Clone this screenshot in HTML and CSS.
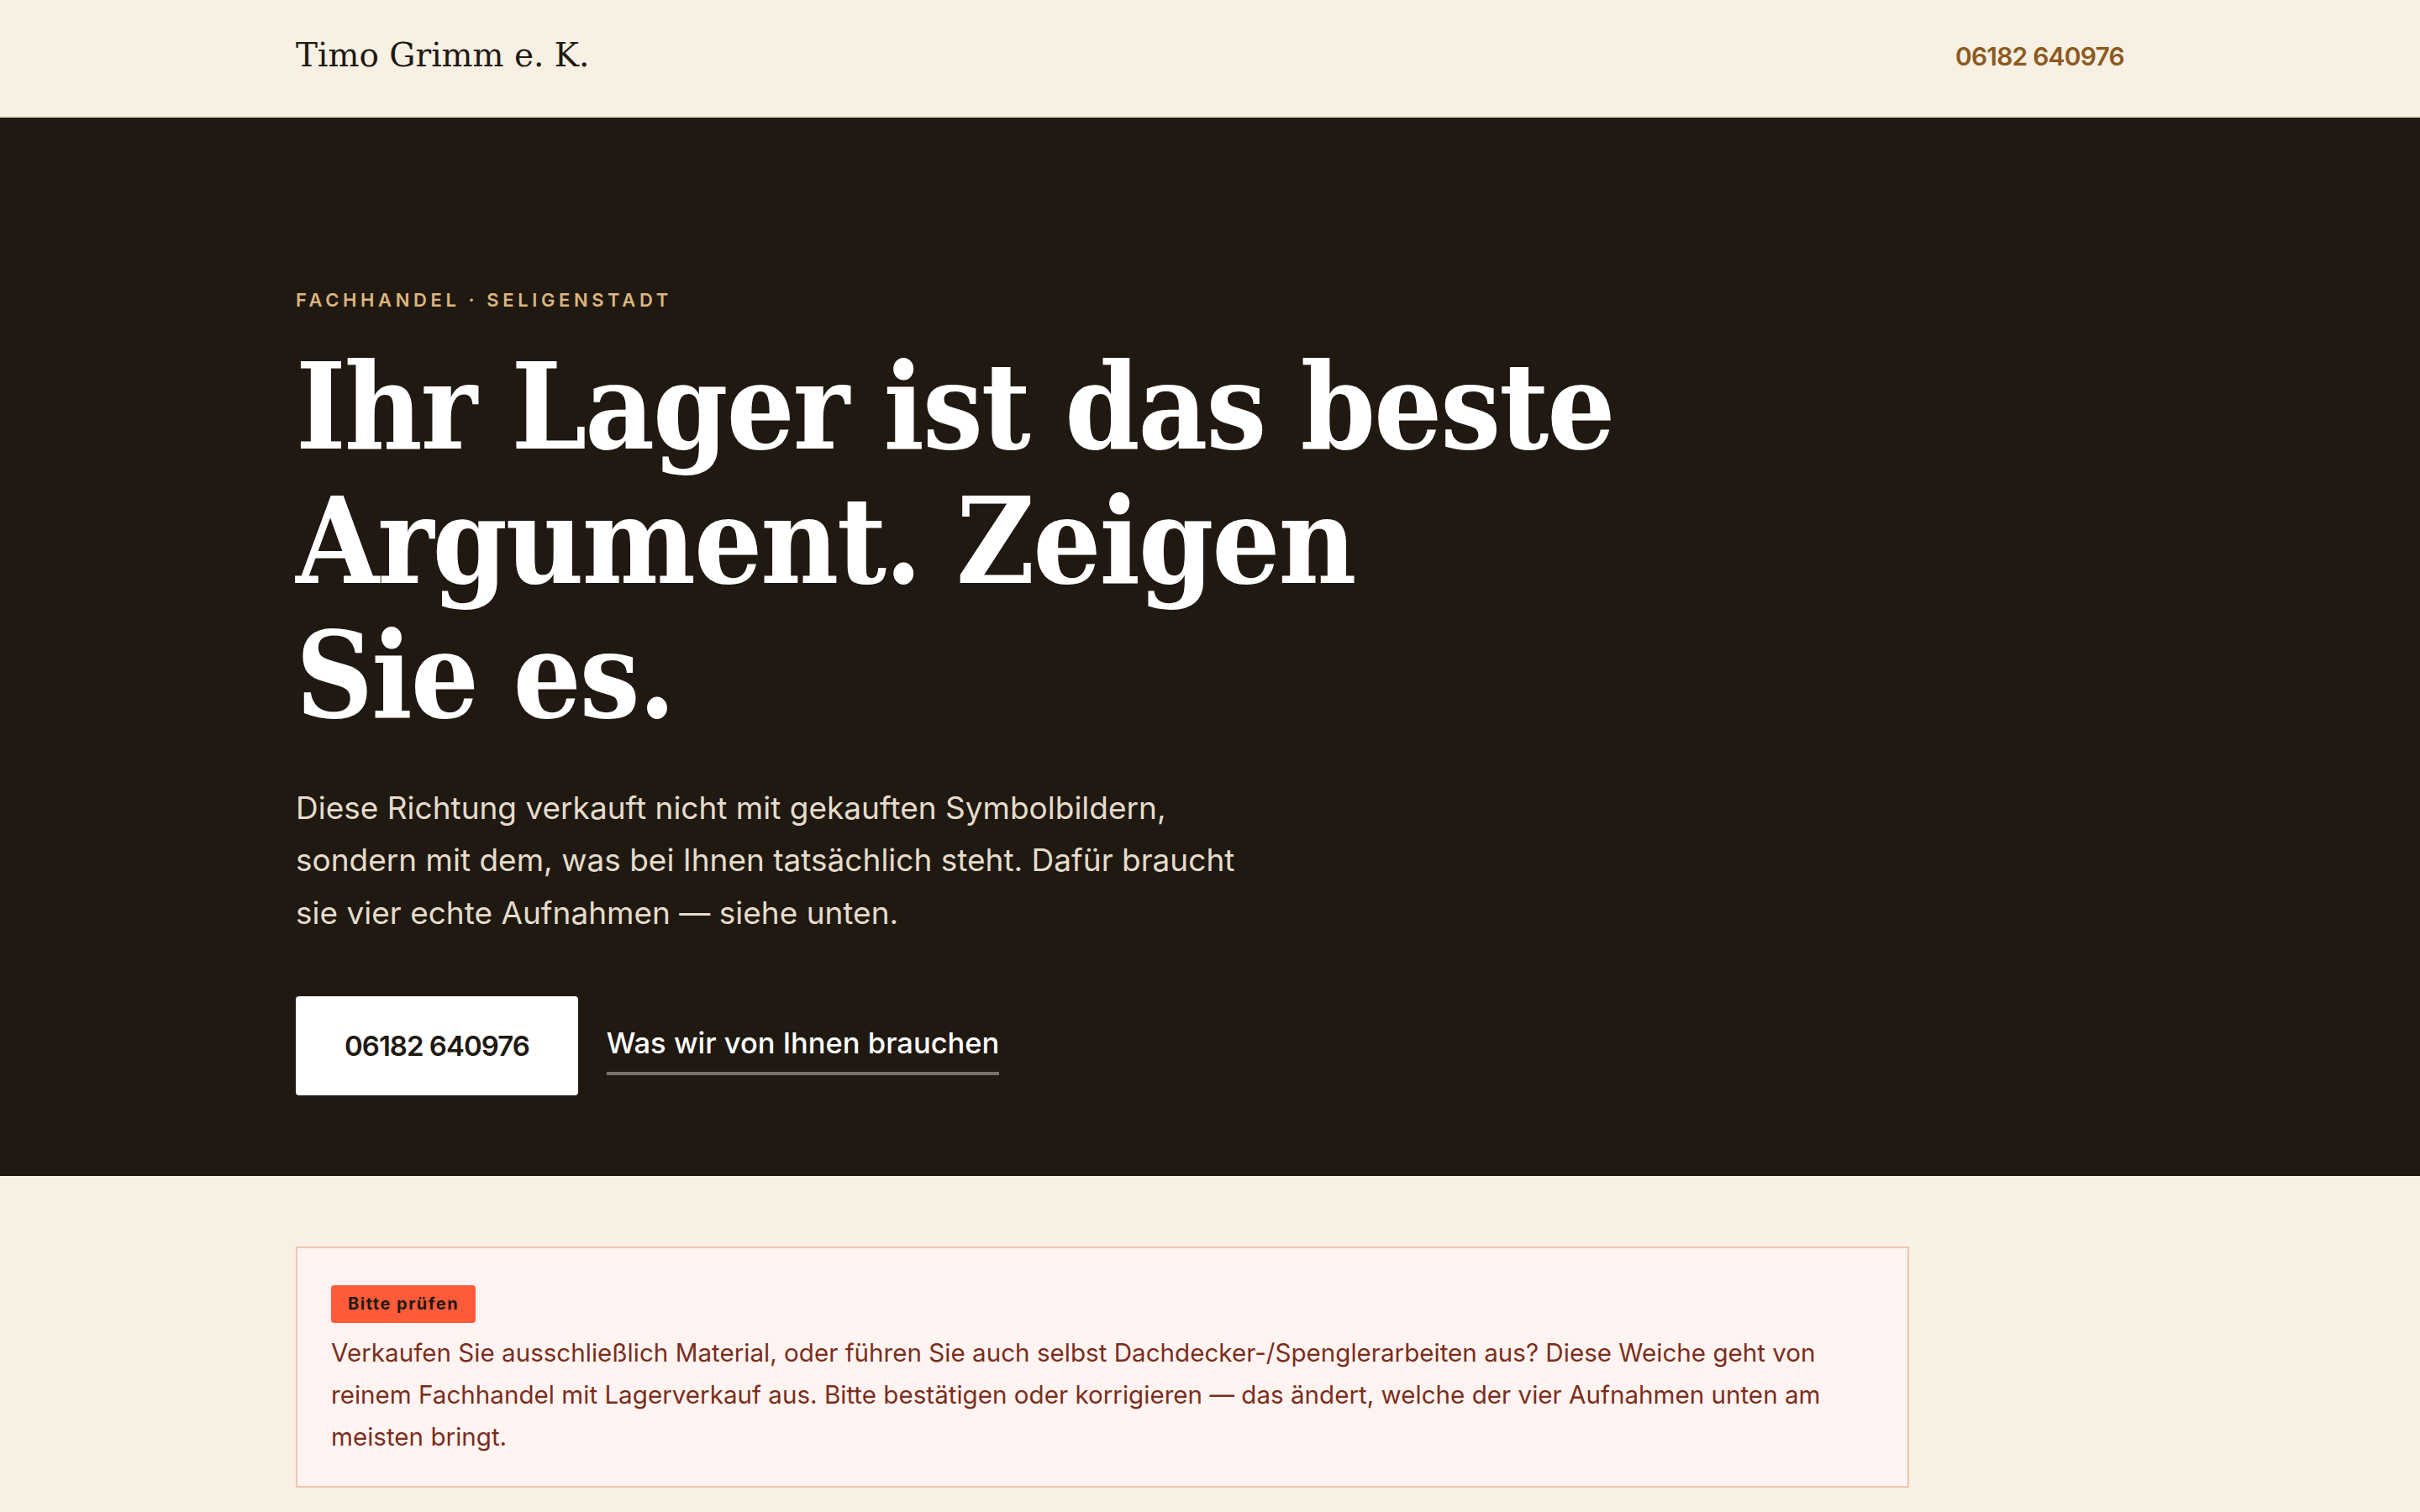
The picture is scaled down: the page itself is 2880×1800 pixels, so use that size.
FILE: index.html
```html
<!DOCTYPE html>
<html lang="de">
<head>
<meta charset="UTF-8">
<meta name="viewport" content="width=device-width, initial-scale=1.0">
<title>Timo Grimm e. K. – Fachhandel Seligenstadt</title>
<link rel="stylesheet" href="styles.css">
</head>
<body>
<header class="site-header">
    <div class="container header-inner">
        <a class="brand" href="#">Timo Grimm e. K.</a>
        <a class="header-phone" href="tel:06182640976">06182 640976</a>
    </div>
</header>

<section class="hero">
    <div class="container">
        <p class="eyebrow">Fachhandel · Seligenstadt</p>
        <h1 class="hero-title">Ihr Lager ist das beste Argument. Zeigen<br>Sie es.</h1>
        <p class="hero-lead">Diese Richtung verkauft nicht mit gekauften Symbolbildern, sondern mit dem, was bei Ihnen tatsächlich steht. Dafür braucht sie vier echte Aufnahmen — siehe unten.</p>
        <div class="hero-actions">
            <a class="btn" href="tel:06182640976">06182 640976</a>
            <a class="text-link" href="#aufnahmen">Was wir von Ihnen brauchen</a>
        </div>
    </div>
</section>

<section class="notice-section">
    <div class="container">
        <div class="notice">
            <span class="badge">Bitte prüfen</span>
            <p>Verkaufen Sie ausschließlich Material, oder führen Sie auch selbst Dachdecker-/Spenglerarbeiten aus? Diese Weiche geht von reinem Fachhandel mit Lagerverkauf aus. Bitte bestätigen oder korrigieren — das ändert, welche der vier Aufnahmen unten am meisten bringt.</p>
        </div>
    </div>
</section>
</body>
</html>
```

FILE: styles.css
```css
body {
    font-family: Inter, "Noto Sans", sans-serif;
    margin: 0;
    padding: 0;
    background-color: #f7f0e3;
    color: #201911;
}
a {
    text-decoration: none;
}
.container {
    max-width: 2176px;
    margin: 0 auto;
}

/* header */
.site-header {
    background-color: #f7f0e3;
    border-bottom: 2px solid #e9dfc6;
}
.header-inner {
    height: 138px;
    display: flex;
    align-items: center;
    justify-content: space-between;
}
.brand {
    font-family: "DejaVu Serif", serif;
    font-size: 39px;
    color: #201911;
    margin-top: -8px;
}
.header-phone {
    font-size: 30px;
    font-weight: 600;
    letter-spacing: -0.8px;
    color: #8b5a1f;
    margin-top: -4px;
}

/* hero */
.hero {
    background-color: #201911;
    padding: 202px 0 96px;
}
.eyebrow {
    margin: 0 0 31px;
    font-size: 22px;
    line-height: 1.4;
    font-weight: 600;
    letter-spacing: 4.6px;
    text-transform: uppercase;
    color: #dcb57f;
}
.hero-title {
    margin: 0;
    max-width: 1800px;
    font-family: "DejaVu Serif", serif;
    font-stretch: condensed;
    font-weight: 700;
    font-size: 142px;
    line-height: 160px;
    letter-spacing: -2px;
    color: #ffffff;
}
.hero-lead {
    margin: 47px 0 0;
    max-width: 1140px;
    font-size: 37px;
    line-height: 62.5px;
    color: #e6dccb;
}
.hero-actions {
    margin-top: 68px;
    display: flex;
    align-items: center;
    gap: 34px;
}
.btn {
    display: inline-block;
    padding: 42px 58px;
    font-size: 33px;
    line-height: 34px;
    font-weight: 600;
    letter-spacing: -1px;
    color: #201911;
    background-color: #ffffff;
    border-radius: 4px;
}
.text-link {
    font-size: 34.5px;
    line-height: 40px;
    font-weight: 500;
    color: #ffffff;
    padding-bottom: 14px;
    border-bottom: 4px solid #77736b;
    margin-top: 12px;
}

/* notice */
.notice-section {
    padding: 84px 0 30px;
}
.notice {
    max-width: 1920px;
    box-sizing: border-box;
    padding: 44px 40px 34px;
    background-color: #fff4f1;
    border: 2px solid #f4c3b4;
}
.badge {
    display: inline-block;
    padding: 0 20px;
    height: 45px;
    line-height: 45px;
    font-size: 20px;
    font-weight: 700;
    letter-spacing: 1.5px;
    color: #1f1a14;
    background-color: #ff5a3a;
    border-radius: 4px;
}
.notice p {
    margin: 10px 0 0;
    font-size: 29.6px;
    line-height: 50px;
    color: #7b2d1c;
}
```
